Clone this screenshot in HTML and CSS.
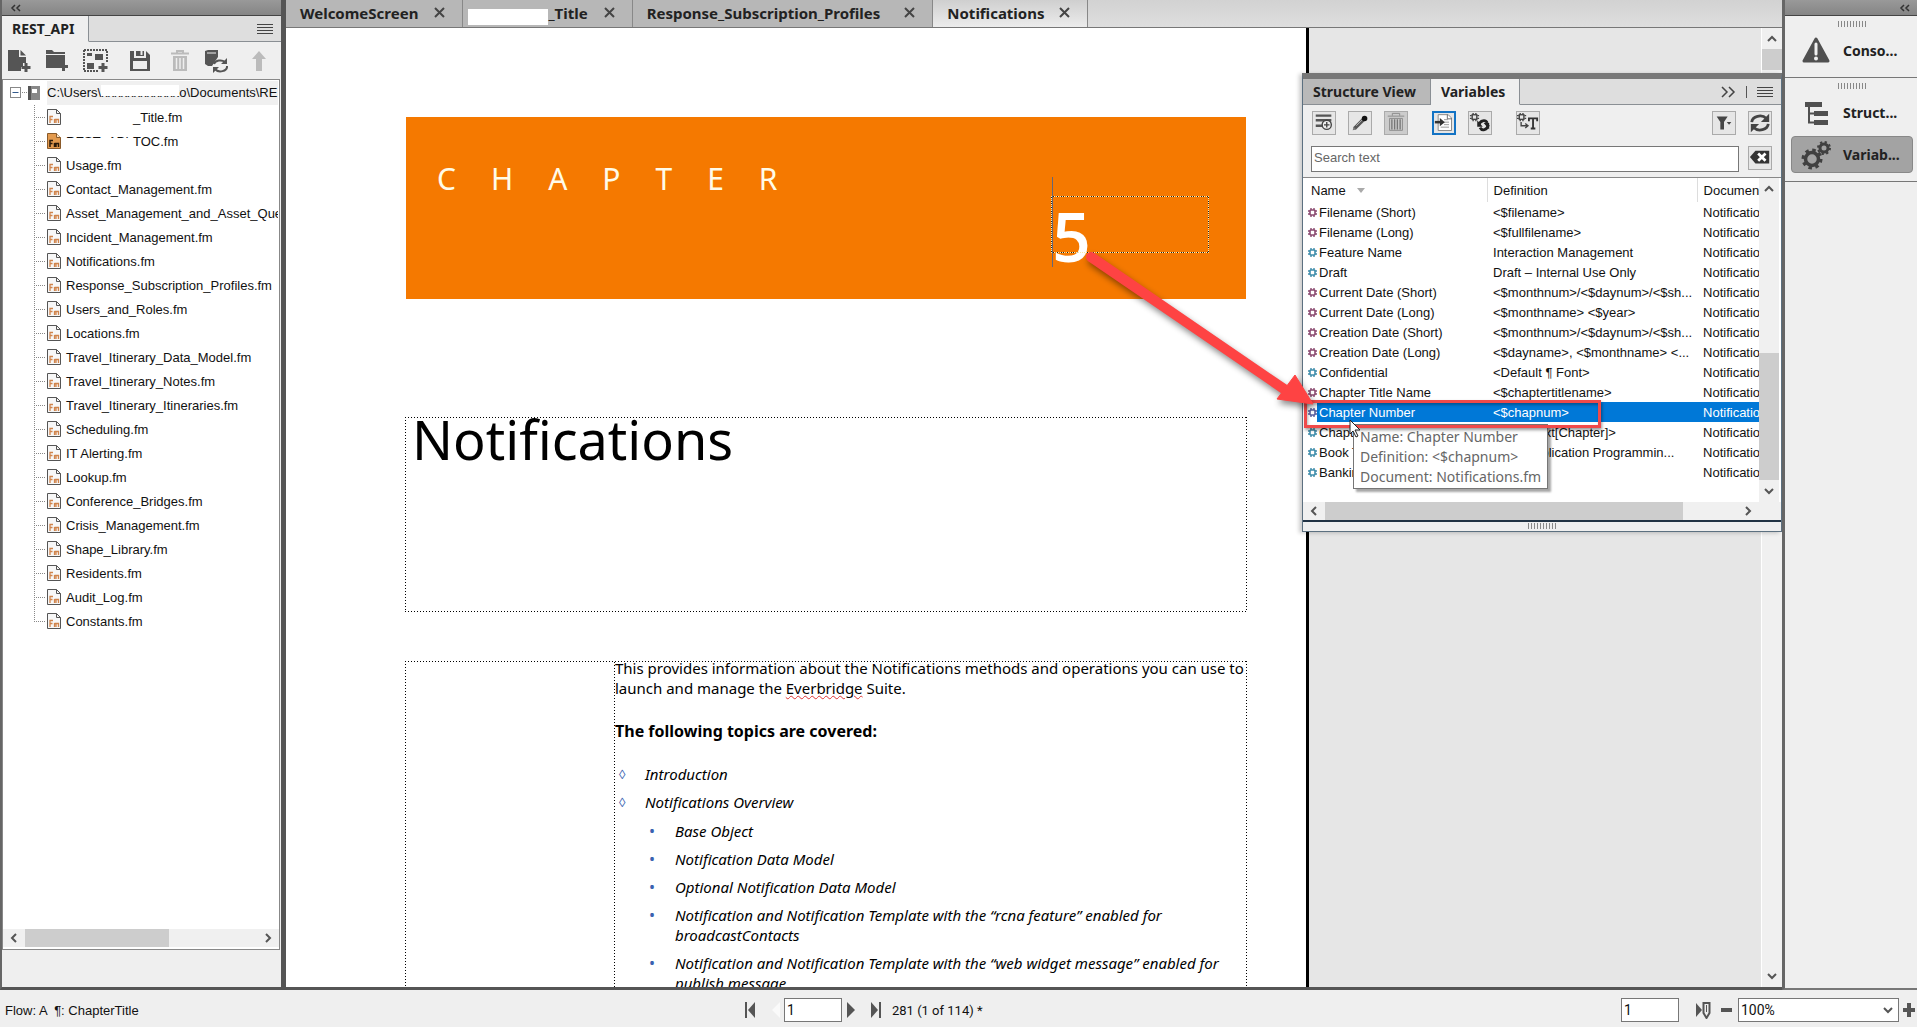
FILE: index.html
```
<!DOCTYPE html>
<html lang="en">

<head>
    <meta charset="UTF-8">
    <meta name="viewport" content="width=device-width, initial-scale=1.0">
    <title>Notifications</title>
    <link rel="stylesheet" href="styles.css">
</head>

<body>
    <svg class="sprite" aria-hidden="true">
        <symbol id="i-menu" viewBox="0 0 16 12">
            <path d="M0 1.5h16M0 4.5h16M0 7.5h16M0 10.5h16" stroke="#444" />
        </symbol>
        <symbol id="i-left2" viewBox="0 0 12 8">
            <path d="M5 1L2 4l3 3M10 1L7 4l3 3" fill="none" stroke="#333" stroke-width="1.5" />
        </symbol>
        <symbol id="i-close" viewBox="0 0 11 11">
            <path d="M1 1l9 9M10 1l-9 9" stroke="#444" stroke-width="2" />
        </symbol>
        <symbol id="i-chev" viewBox="0 0 12 12">
            <path d="M2 8l4-4 4 4" fill="none" stroke="#555" stroke-width="2" />
        </symbol>
        <symbol id="i-fm" viewBox="0 0 14 16">
            <path d="M.5.5h9l4 4v11H.5z" fill="#f7f7f7" stroke="#555" />
            <path d="M9.5.5v4h4" fill="none" stroke="#555" />
            <path d="M3 14V7.500h3M3 10.500h2.500M7.500 14v-4M7.500 10.500h1.500V14M9.500 10.500h2V14" fill="none" stroke="#d0844c" stroke-width="1.300" />
        </symbol>
        <symbol id="i-fm-on" viewBox="0 0 14 16">
            <path d="M.5.5h9l4 4v11H.5z" fill="#e39a4e" stroke="#8a5a2a" />
            <path d="M9.500.5v4h4" fill="#fbe3c6" stroke="#8a5a2a" />
            <path d="M3 14V7.500h3M3 10.500h2.500M7.500 14v-4M7.500 10.500h1.500V14M9.500 10.500h2V14" fill="none" stroke="#2b1a0a" stroke-width="1.500" />
        </symbol>
        <symbol id="i-gear" viewBox="0 0 9 9">
            <path d="M3 0v2M6 0v2M3 7v2M6 7v2M0 3h2M0 6h2M7 3h2M7 6h2" stroke="currentColor" stroke-width="1.400" />
            <rect x="2" y="2" width="5" height="5" rx="1" fill="#fff" stroke="currentColor" stroke-width="1.600" />
        </symbol>
        <symbol id="i-grip" viewBox="0 0 28 6">
            <path d="M.5 0v6M3.500 0v6M6.500 0v6M9.500 0v6M12.500 0v6M15.500 0v6M18.500 0v6M21.500 0v6M24.500 0v6M27.500 0v6" stroke="#888" />
        </symbol>
        <symbol id="i-sync" viewBox="0 0 24 24">
            <path d="M3 11a9 7 0 0 1 16-4M21 13a9 7 0 0 1-16 4" fill="none" stroke="#444" stroke-width="3" />
            <path d="M22 2v9h-9zM2 22v-9h9z" fill="#444" />
        </symbol>
    </svg>

    <div class="app">
        <aside class="book">
            <div class="bar"><svg width="12" height="8"><use href="#i-left2" /></svg></div>
            <div class="tabs book-tabs">
                <button class="tab active">REST_API</button>
                <button class="plain menu" aria-label="Panel menu"><svg width="16" height="12"><use href="#i-menu" /></svg></button>
            </div>
            <div class="book-tools">
                <button class="plain" aria-label="Add file"><svg width="24" height="24" viewBox="0 0 24 24">
                        <path d="M1 1h11v7h7v6h-3v4h-2v4H1z" fill="#555" />
                        <path d="M13.500 1l5.500 5.500h-5.500z" fill="#555" />
                        <path d="M19 14v9M14.500 18.500h9" stroke="#555" stroke-width="3" />
                    </svg></button>
                <button class="plain" aria-label="Add folder"><svg width="24" height="24" viewBox="0 0 24 24">
                        <path d="M1 1h6l2 2h11v2H1zM1 6h19v7h-3v3h-3v3H1z" fill="#555" />
                        <path d="M18.500 13v9M14 17.500h9" stroke="#555" stroke-width="3" />
                    </svg></button>
                <button class="plain" aria-label="Add group"><svg width="26" height="24" viewBox="0 0 26 24">
                        <path d="M1 1h23v13M1 1v21h15" fill="none" stroke="#555" stroke-width="2" stroke-dasharray="2 1" />
                        <path d="M4 4h5v3H4zM12 5h8v6h-8zM4 14h7v6H4z" fill="#555" />
                        <path d="M20 14v9M15.500 18.500h9" stroke="#555" stroke-width="3" />
                    </svg></button>
                <button class="plain spaced" aria-label="Save"><svg width="22" height="22" viewBox="0 0 22 22">
                        <path d="M1 1h4v7h12V1l4 4v16H1z" fill="#555" />
                        <path d="M7 1h8v5H7z" fill="#555" />
                        <path d="M11.500 1h2v4h-2zM4 11h14v8H4z" fill="#efefef" />
                    </svg></button>
                <button class="plain spaced" aria-label="Delete"><svg width="18" height="22" viewBox="0 0 18 22">
                        <path d="M0 3.500h18M6 3V1h6v2" fill="none" stroke="#bbb" stroke-width="2" />
                        <path d="M2 6h14v15H2z" fill="#bbb" />
                        <path d="M5.500 8v11M9 8v11M12.500 8v11" stroke="#efefef" stroke-width="1.500" />
                    </svg></button>
                <button class="plain" aria-label="Update book"><svg width="25" height="24" viewBox="0 0 25 24">
                        <path d="M2 2l3-1h10v7l-6 9H5l-3-2z" fill="#555" />
                        <path d="M4 4h9" stroke="#efefef" />
                        <path d="M11 15a6.500 5 0 0 1 11-2M24 17a6.500 5 0 0 1-12 3" fill="none" stroke="#555" stroke-width="2" />
                        <path d="M24 9v6h-6zM10 24v-6h6z" fill="#555" />
                    </svg></button>
                <button class="plain" aria-label="Move up"><svg width="14" height="20" viewBox="0 0 14 20">
                        <path d="M7 0l7 8h-4v12H4V8H0z" fill="#bbb" />
                    </svg></button>
            </div>
            <div class="tree-box">
                <div class="tree">
                    <div class="root">
                        <svg width="37" height="16" viewBox="0 0 37 16">
                            <rect x=".5" y="2.500" width="10" height="10" fill="#fff" stroke="#888" />
                            <path d="M2.500 7.500h6" stroke="#335a8c" />
                            <path d="M12 7.500h5" stroke="#888" stroke-dasharray="1 1" />
                            <path d="M18 1h12v14H18z" fill="#888" />
                            <path d="M18 1h3v14h-3z" fill="#555" />
                            <path d="M22 4h5v4h-5z" fill="#fff" />
                        </svg>
                        <span class="path">C:\Users\<span class="hide-top">xxxxxxxxxxxx</span>o\Documents\REST_API</span>
                    </div>
                    <ul class="files">
                        <li><svg><use href="#i-fm" /></svg><span class="blank"></span>_Title.fm</li>
                        <li><svg><use href="#i-fm-on" /></svg><span class="hide-low">REST_API</span>TOC.fm</li>
                        <li><svg><use href="#i-fm" /></svg>Usage.fm</li>
                        <li><svg><use href="#i-fm" /></svg>Contact_Management.fm</li>
                        <li><svg><use href="#i-fm" /></svg>Asset_Management_and_Asset_Queries.fm</li>
                        <li><svg><use href="#i-fm" /></svg>Incident_Management.fm</li>
                        <li><svg><use href="#i-fm" /></svg>Notifications.fm</li>
                        <li><svg><use href="#i-fm" /></svg>Response_Subscription_Profiles.fm</li>
                        <li><svg><use href="#i-fm" /></svg>Users_and_Roles.fm</li>
                        <li><svg><use href="#i-fm" /></svg>Locations.fm</li>
                        <li><svg><use href="#i-fm" /></svg>Travel_Itinerary_Data_Model.fm</li>
                        <li><svg><use href="#i-fm" /></svg>Travel_Itinerary_Notes.fm</li>
                        <li><svg><use href="#i-fm" /></svg>Travel_Itinerary_Itineraries.fm</li>
                        <li><svg><use href="#i-fm" /></svg>Scheduling.fm</li>
                        <li><svg><use href="#i-fm" /></svg>IT Alerting.fm</li>
                        <li><svg><use href="#i-fm" /></svg>Lookup.fm</li>
                        <li><svg><use href="#i-fm" /></svg>Conference_Bridges.fm</li>
                        <li><svg><use href="#i-fm" /></svg>Crisis_Management.fm</li>
                        <li><svg><use href="#i-fm" /></svg>Shape_Library.fm</li>
                        <li><svg><use href="#i-fm" /></svg>Residents.fm</li>
                        <li><svg><use href="#i-fm" /></svg>Audit_Log.fm</li>
                        <li><svg><use href="#i-fm" /></svg>Constants.fm</li>
                    </ul>
                </div>
                <div class="hscroll">
                    <svg class="chev left"><use href="#i-chev" /></svg>
                    <div class="track"><div class="thumb tree-thumb"></div></div>
                    <svg class="chev right"><use href="#i-chev" /></svg>
                </div>
            </div>
        </aside>

        <main class="work">
            <nav class="doc-tabs">
                <div class="doc-tab"><span>WelcomeScreen</span><button class="plain" aria-label="Close"><svg width="11" height="11"><use href="#i-close" /></svg></button></div>
                <div class="doc-tab second"><span class="cover"></span><span>_Title</span><button class="plain" aria-label="Close"><svg width="11" height="11"><use href="#i-close" /></svg></button></div>
                <div class="doc-tab third"><span>Response_Subscription_Profiles</span><button class="plain" aria-label="Close"><svg width="11" height="11"><use href="#i-close" /></svg></button></div>
                <div class="doc-tab active"><span>Notifications</span><button class="plain" aria-label="Close"><svg width="11" height="11"><use href="#i-close" /></svg></button></div>
            </nav>
            <div class="canvas">
                <article class="page">
                    <header class="banner">
                        <span class="chapter">CHAPTER</span>
                        <div class="number">5</div>
                    </header>
                    <div class="frame title-frame">
                        <h1>Notifications</h1>
                    </div>
                    <div class="frame body-frame">
                        <div class="column">
                            <p>This provides information about the Notifications methods and operations you can use to launch and manage the <span class="typo">Everbridge</span> Suite.</p>
                            <h2>The following topics are covered:</h2>
                            <ul class="topics">
                                <li>Introduction</li>
                                <li>Notifications Overview
                                    <ul>
                                        <li>Base Object</li>
                                        <li>Notification Data Model</li>
                                        <li>Optional Notification Data Model</li>
                                        <li>Notification and Notification Template with the “rcna feature” enabled for broadcastContacts</li>
                                        <li>Notification and Notification Template with the “web widget message” enabled for publish message</li>
                                    </ul>
                                </li>
                            </ul>
                        </div>
                    </div>
                </article>
                <div class="desk"></div>
                <div class="vscroll doc-scroll">
                    <svg class="chev"><use href="#i-chev" /></svg>
                    <div class="track"><div class="thumb"></div></div>
                    <svg class="chev down"><use href="#i-chev" /></svg>
                </div>
            </div>

            <section class="vars">
                <div class="tabs vars-tabs">
                    <button class="tab">Structure View</button>
                    <button class="tab active">Variables</button>
                    <button class="plain more" aria-label="More"><svg width="16" height="12" viewBox="0 0 16 12">
                            <path d="M2 1l5 5-5 5M9 1l5 5-5 5" fill="none" stroke="#444" stroke-width="1.500" />
                        </svg></button>
                    <button class="plain menu" aria-label="Panel menu"><svg width="16" height="12"><use href="#i-menu" /></svg></button>
                </div>
                <div class="vars-tools">
                    <button class="tool" aria-label="New variable"><svg viewBox="0 0 24 24">
                            <path d="M3 4h17M3 9h17M3 15h7" stroke="#555" stroke-width="2.500" />
                            <circle cx="15" cy="14" r="5" fill="#eee" stroke="#444" stroke-width="1.500" />
                            <path d="M15 11v6M12 14h6" stroke="#444" stroke-width="1.500" />
                        </svg></button>
                    <button class="tool" aria-label="Edit"><svg viewBox="0 0 24 24">
                            <path d="M6 18L17 7" stroke="#555" stroke-width="4" />
                            <path d="M8 15l8-8" stroke="#bbb" />
                            <path d="M4 20l1-4 3 3z" fill="#777" />
                            <circle cx="17" cy="7" r="3" fill="#111" />
                        </svg></button>
                    <button class="tool off" aria-label="Delete"><svg viewBox="0 0 24 24">
                            <path d="M3 4.500h18M8 4V1.500h8V4M5 7h14v13H5z" fill="none" stroke="#888" />
                            <path d="M7.500 8v11M10.500 8v11M13.500 8v11M16.500 8v11" stroke="#777" stroke-width="1.500" />
                        </svg></button>
                    <button class="tool insert on" aria-label="Insert"><svg viewBox="0 0 24 24">
                            <path d="M5 2h12l4 4v15H5z" fill="#fff" stroke="#777" />
                            <path d="M16 2v5h5" fill="none" stroke="#555" />
                            <path d="M12 8h5M12 11h6M12 14h6M8 17h10" stroke="#888" />
                            <path d="M1 11h7" stroke="#333" stroke-width="3" />
                            <path d="M7 6l6 5-6 5z" fill="#333" />
                        </svg></button>
                    <button class="tool" aria-label="Update variable"><svg viewBox="0 0 24 24">
                            <path d="M4.500 1v2M7.500 1v2M4.500 8v2M7.500 8v2M1 4h2M1 7h2M9 4h2M9 7h2" stroke="#444" stroke-width="1.500" />
                            <rect x="3.500" y="3" width="5" height="5" fill="none" stroke="#444" stroke-width="1.500" />
                            <path d="M11 14c1-5 7-6 9-2M21 14c-1 6-7 7-9 3" fill="none" stroke="#222" stroke-width="3" />
                            <path d="M9 9v7h6zM22 19v-7h-6z" fill="#222" />
                        </svg></button>
                    <button class="tool text" aria-label="Convert to text"><svg viewBox="0 0 24 24">
                            <path d="M3.500 1v2M6.500 1v2M3.500 8v2M6.500 8v2M0 4h2M0 7h2M8 4h2M8 7h2" stroke="#444" stroke-width="1.500" />
                            <rect x="2.500" y="3" width="5" height="5" fill="none" stroke="#444" stroke-width="1.500" />
                            <path d="M4.500 11v4H11M9 12.500l3 2.500-3 2.500" fill="none" stroke="#444" stroke-width="1.500" />
                            <path d="M13 10V7h9v3M17.500 7v11M15 18h5" fill="none" stroke="#333" stroke-width="2" />
                        </svg></button>
                    <button class="tool filter" aria-label="Filter"><svg viewBox="0 0 24 24">
                            <path d="M4 5h12l-4 6v8H8v-8z" fill="#444" />
                            <path d="M15 11h5l-2.500 3z" fill="#444" />
                        </svg></button>
                    <button class="tool" aria-label="Refresh"><svg viewBox="0 0 24 24"><use href="#i-sync" /></svg></button>
                </div>
                <div class="search">
                    <input type="text" placeholder="Search text" aria-label="Search text">
                    <button class="tool" aria-label="Clear"><svg viewBox="0 0 24 24">
                            <path d="M1 11l6-7h15v14H7z" fill="#333" />
                            <path d="M10 7l8 8M18 7l-8 8" stroke="#fff" stroke-width="3" />
                        </svg></button>
                </div>
                <div class="list">
                    <div class="list-main">
                        <table>
                            <colgroup>
                                <col class="c-icon">
                                <col class="c-name">
                                <col class="c-def">
                                <col>
                            </colgroup>
                            <thead>
                                <tr>
                                    <th colspan="2">Name <svg class="sort" viewBox="0 0 8 5"><path d="M0 0h8L4 5z" fill="#aaa" /></svg></th>
                                    <th>Definition</th>
                                    <th>Document</th>
                                </tr>
                            </thead>
                            <tbody>
                                <tr><td><svg><use href="#i-gear" /></svg></td><td>Filename (Short)</td><td>&lt;$filename&gt;</td><td>Notifications</td></tr>
                                <tr><td><svg><use href="#i-gear" /></svg></td><td>Filename (Long)</td><td>&lt;$fullfilename&gt;</td><td>Notifications</td></tr>
                                <tr class="user"><td><svg><use href="#i-gear" /></svg></td><td>Feature Name</td><td>Interaction Management</td><td>Notifications</td></tr>
                                <tr class="user"><td><svg><use href="#i-gear" /></svg></td><td>Draft</td><td>Draft – Internal Use Only</td><td>Notifications</td></tr>
                                <tr><td><svg><use href="#i-gear" /></svg></td><td>Current Date (Short)</td><td>&lt;$monthnum&gt;/&lt;$daynum&gt;/&lt;$sh...</td><td>Notifications</td></tr>
                                <tr><td><svg><use href="#i-gear" /></svg></td><td>Current Date (Long)</td><td>&lt;$monthname&gt; &lt;$year&gt;</td><td>Notifications</td></tr>
                                <tr><td><svg><use href="#i-gear" /></svg></td><td>Creation Date (Short)</td><td>&lt;$monthnum&gt;/&lt;$daynum&gt;/&lt;$sh...</td><td>Notifications</td></tr>
                                <tr><td><svg><use href="#i-gear" /></svg></td><td>Creation Date (Long)</td><td>&lt;$dayname&gt;, &lt;$monthname&gt; &lt;...</td><td>Notifications</td></tr>
                                <tr class="user"><td><svg><use href="#i-gear" /></svg></td><td>Confidential</td><td>&lt;Default ¶ Font&gt;</td><td>Notifications</td></tr>
                                <tr><td><svg><use href="#i-gear" /></svg></td><td>Chapter Title Name</td><td>&lt;$chaptertitlename&gt;</td><td>Notifications</td></tr>
                                <tr class="selected"><td><svg><use href="#i-gear" /></svg></td><td>Chapter Number</td><td>&lt;$chapnum&gt;</td><td>Notifications</td></tr>
                                <tr class="user"><td><svg><use href="#i-gear" /></svg></td><td>Chapter</td><td>&lt;$paratext[Chapter]&gt;</td><td>Notifications</td></tr>
                                <tr class="user"><td><svg><use href="#i-gear" /></svg></td><td>Book Title</td><td>Suite Application Programmin...</td><td>Notifications</td></tr>
                                <tr class="user"><td><svg><use href="#i-gear" /></svg></td><td>Banking</td><td></td><td>Notifications</td></tr>
                            </tbody>
                        </table>
                        <div class="vscroll list-scroll">
                            <svg class="chev"><use href="#i-chev" /></svg>
                            <div class="track"><div class="thumb"></div></div>
                            <svg class="chev down"><use href="#i-chev" /></svg>
                        </div>
                    </div>
                    <div class="hscroll vars-hscroll">
                        <svg class="chev left"><use href="#i-chev" /></svg>
                        <div class="track"><div class="thumb vars-thumb"></div></div>
                        <svg class="chev right"><use href="#i-chev" /></svg>
                    </div>
                </div>
                <div class="grip"><svg width="28" height="6"><use href="#i-grip" /></svg></div>
                <div class="tooltip" role="tooltip">Name: Chapter Number<br>Definition: &lt;$chapnum&gt;<br>Document: Notifications.fm</div>
                <div class="callout"></div>
                <svg class="cursor" width="14" height="20" viewBox="0 0 14 20">
                    <path d="M1 1v14l3-3 3 6 2-1-3-6h5z" fill="#fff" stroke="#222" />
                </svg>
                <svg class="arrow" width="240" height="170" viewBox="0 0 240 170">
                    <path d="M9 10L202 142" stroke="#fe4343" stroke-width="10" stroke-linecap="round" />
                    <path d="M213 128l18 29-36-5z" fill="#fe4343" stroke="#fe4343" />
                </svg>
            </section>
        </main>

        <aside class="dock">
            <div class="bar"><svg width="12" height="8"><use href="#i-left2" /></svg></div>
            <div class="dock-group">
                <svg class="dock-grip" width="28" height="6"><use href="#i-grip" /></svg>
                <button class="dock-item"><svg width="30" height="30" viewBox="0 0 30 30">
                        <path d="M15 3l12 22H3z" fill="#505050" stroke="#505050" stroke-width="3" stroke-linejoin="round" />
                        <path d="M15 8v10" stroke="#f0f0f0" stroke-width="3" stroke-linecap="round" />
                        <circle cx="15" cy="22.500" r="2" fill="#f0f0f0" />
                    </svg>Conso...</button>
            </div>
            <div class="dock-group">
                <svg class="dock-grip" width="28" height="6"><use href="#i-grip" /></svg>
                <button class="dock-item"><svg width="30" height="30" viewBox="0 0 30 30">
                        <path d="M4 4h17v5H4zM13 13h14v5H13zM13 22h14v5H13z" fill="#505050" />
                        <path d="M8 8v16.500h6M8 15.500h6" fill="none" stroke="#505050" stroke-width="2" />
                    </svg>Struct...</button>
                <button class="dock-item pressed"><svg width="30" height="30" viewBox="0 0 30 30">
                        <circle cx="11" cy="19" r="6.500" fill="none" stroke="#404040" stroke-width="3.500" />
                        <circle cx="11" cy="19" r="9" fill="none" stroke="#404040" stroke-width="3" stroke-dasharray="3.500 3.560" />
                        <circle cx="23" cy="8" r="4" fill="none" stroke="#404040" stroke-width="3" />
                        <circle cx="23" cy="8" r="6" fill="none" stroke="#404040" stroke-width="2" stroke-dasharray="2.300 2.400" />
                    </svg>Variab...</button>
            </div>
        </aside>
    </div>

    <footer class="status">
        <span class="flow">Flow: A &nbsp;¶: ChapterTitle</span>
        <div class="pager">
            <button class="plain" aria-label="First page"><svg width="10" height="16" viewBox="0 0 10 16">
                    <path d="M1 0v16" stroke="#555" stroke-width="2" />
                    <path d="M10 0v16L3 8z" fill="#555" />
                </svg></button>
            <button class="plain prev" aria-label="Previous page"><svg width="8" height="16" viewBox="0 0 8 16">
                    <path d="M8 0v16L0 8z" fill="#fafafa" />
                </svg></button>
            <input class="box" type="text" value="1" aria-label="Page">
            <button class="plain next" aria-label="Next page"><svg width="8" height="16" viewBox="0 0 8 16">
                    <path d="M0 0v16l8-8z" fill="#555" />
                </svg></button>
            <button class="plain last" aria-label="Last page"><svg width="10" height="16" viewBox="0 0 10 16">
                    <path d="M9 0v16" stroke="#555" stroke-width="2" />
                    <path d="M0 0v16l7-8z" fill="#555" />
                </svg></button>
            <span class="count">281 (1 of 114) *</span>
        </div>
        <div class="zoom">
            <input class="box" type="text" value="1" aria-label="Line">
            <svg class="pen" width="15" height="17" viewBox="0 0 15 17">
                <path d="M0 1v14l6-7z" fill="#555" />
                <path d="M7.500 1h6v10l-3 5-3-5z" fill="#eee" stroke="#555" stroke-width="2" />
                <path d="M10.500 3v7" stroke="#555" />
            </svg>
            <button class="plain minus" aria-label="Zoom out"><svg width="11" height="12" viewBox="0 0 11 12">
                    <path d="M0 6h11" stroke="#555" stroke-width="4" />
                </svg></button>
            <div class="zoom-select">
                <select aria-label="Zoom">
                    <option>100%</option>
                </select>
                <svg class="chev down"><use href="#i-chev" /></svg>
            </div>
            <button class="plain" aria-label="Zoom in"><svg width="12" height="14" viewBox="0 0 12 14">
                    <path d="M0 7h12M6 0v14" stroke="#555" stroke-width="4" />
                </svg></button>
        </div>
    </footer>
</body>

</html>
```
FILE: styles.css
```
* {
    box-sizing: border-box;
}

body {
    margin: 0;
    height: 100vh;
    display: flex;
    flex-direction: column;
    overflow: hidden;
    background: #efefef;
    color: #111;
    font-family: "Liberation Sans", Arial, sans-serif;
    font-size: 13px;
}

svg {
    display: block;
    flex: none;
}

button,
input,
select {
    font: inherit;
    color: inherit;
}

ul {
    list-style: none;
    margin: 0;
    padding: 0;
}

.sprite {
    position: absolute;
    width: 0;
    height: 0;
}

.app {
    flex: 1;
    display: flex;
    min-height: 0;
}

.plain {
    border: 0;
    padding: 0;
    background: none;
}

.bar {
    height: 16px;
    display: flex;
    align-items: center;
    padding: 0 8px;
    background: linear-gradient(#999, #858585);
    border-bottom: 1px solid #444;
}

/* panel tabs */
.tabs {
    display: flex;
    align-items: center;
    height: 26px;
    background: #dedede;
    box-shadow: inset 0 -1px #8a8f94;
}

.tab {
    height: 26px;
    padding: 0 14px 0 10px;
    border: 0;
    border-right: 1px solid #8a8f94;
    border-bottom: 1px solid #8a8f94;
    background: #b9b9b9;
    font: bold 14px "Noto Sans", sans-serif;
    color: #222;
}

.tab.active {
    background: #efefef;
    border-bottom-color: #efefef;
}

.menu {
    margin: 0 8px 0 auto;
}

/* book panel */
.book {
    width: 286px;
    display: flex;
    flex-direction: column;
    border-left: 2px solid #666;
    border-right: 5px solid #555;
    border-bottom: 3px solid #555;
}

.book-tools {
    display: flex;
    align-items: center;
    gap: 14px;
    height: 37px;
    padding: 0 15px 0 5px;
}

.book-tools .spaced {
    margin-left: 6px;
}

.book-tools .plain:last-child {
    margin-left: auto;
}

.tree-box {
    flex: 1;
    min-height: 0;
    display: flex;
    flex-direction: column;
    margin: 0 1px 37px 0;
    padding-bottom: 2px;
    border: 1px solid #888;
    background: #fff;
}

.tree {
    flex: 1;
    overflow: hidden;
    margin-right: 1px;
    padding-top: 1px;
    white-space: nowrap;
}

.root {
    display: flex;
    align-items: center;
    height: 24px;
    padding-left: 7px;
}

.path {
    flex: 1;
    height: 24px;
    line-height: 24px;
    background: #f0f0f0;
}

.hide-top,
.hide-low {
    position: relative;
}

.hide-top::after,
.hide-low::after {
    content: "";
    position: absolute;
    left: 0;
    right: 0;
    top: 0;
    height: 11px;
    background: #fff;
}

.hide-low::after {
    top: 4px;
    height: 12px;
}

.files {
    margin-left: 31px;
    background: repeating-linear-gradient(#888 0 1px, #fff 1px 2px) no-repeat 0 0 / 1px calc(100% - 12px);
}

.files li {
    display: flex;
    align-items: center;
    height: 24px;
}

.files li::before {
    content: "";
    flex: none;
    width: 11px;
    margin-right: 2px;
    height: 1px;
    background: repeating-linear-gradient(90deg, #888 0 1px, #fff 1px 2px);
}

.files svg {
    width: 14px;
    height: 16px;
    margin-right: 5px;
}

.files .blank,
.files .hide-low {
    width: 67px;
}

/* scroll bars */
.chev {
    width: 12px;
    height: 12px;
}

.chev.left {
    transform: rotate(-90deg);
}

.chev.right {
    transform: rotate(90deg);
}

.chev.down {
    transform: rotate(180deg);
}

.hscroll {
    display: flex;
    align-items: center;
    gap: 5px;
    height: 18px;
    padding: 0 5px;
    background: #f0f0f0;
}

.vscroll {
    display: flex;
    flex-direction: column;
    align-items: center;
    gap: 4px;
    width: 20px;
    padding: 5px 0;
    background: #f0f0f0;
}

.track {
    flex: 1;
    align-self: stretch;
}

.thumb {
    background: #cdcdcd;
}

.hscroll .thumb {
    height: 18px;
}

.tree-thumb {
    width: 62%;
}

/* document area */
.work {
    flex: 1;
    min-width: 0;
    position: relative;
    display: flex;
    flex-direction: column;
    border-bottom: 3px solid #555;
}

.doc-tabs {
    display: flex;
    height: 28px;
    background: linear-gradient(#d2d2d2, #dedede);
    border-bottom: 1px solid #777;
}

.doc-tab {
    display: flex;
    align-items: center;
    gap: 16px;
    padding: 0 17px 2px 14px;
    background: #b7b7b7;
    border-right: 1px solid #888;
    font: bold 15px "Noto Sans", sans-serif;
    color: #222;
}

.doc-tab.active {
    gap: 14px;
    background: linear-gradient(#cfcfcf, #ececec);
}

.doc-tab.second {
    padding-left: 5px;
}

.doc-tab.third {
    gap: 24px;
}

.cover {
    align-self: flex-end;
    width: 80px;
    height: 16px;
    margin-right: -16px;
    background: #fff;
}

.canvas {
    flex: 1;
    min-height: 0;
    display: flex;
}

.page {
    width: 1023px;
    padding: 89px 59px 0 119px;
    overflow: hidden;
    background: #fff;
    border-right: 3px solid #000;
    font-family: "Noto Sans", sans-serif;
    color: #000;
}

.desk {
    flex: 1;
    background: #e6e6e6;
    border-right: 1px solid #fff;
}

.doc-scroll .thumb {
    height: 21px;
}

.banner {
    display: flex;
    justify-content: space-between;
    height: 182px;
    margin: 0 1px;
    padding: 41px 37px 0 31px;
    background: #f57900;
    color: #fffbe8;
}

.chapter {
    font-size: 30px;
    line-height: 42px;
    letter-spacing: 35px;
}

.number {
    width: 158px;
    height: 57px;
    margin-top: 38px;
    border: 1px dashed #222;
    outline: 1px dotted #ffe9a8;
    outline-offset: -1px;
    font: 600 68px/78px "Open Sans", sans-serif;
    color: #fff;
}

/* text caret */
.number::before {
    content: "";
    position: absolute;
    width: 1px;
    height: 90px;
    margin-top: -20px;
    background: #667;
}

/* text frames, one dot every three pixels */
.frame {
    background:
        repeating-linear-gradient(90deg, #000 0 1px, transparent 1px 3px) top / 100% 1px no-repeat,
        repeating-linear-gradient(90deg, #000 0 1px, transparent 1px 3px) bottom / 100% 1px no-repeat,
        repeating-linear-gradient(#000 0 1px, transparent 1px 3px) left / 1px 100% no-repeat,
        repeating-linear-gradient(#000 0 1px, transparent 1px 3px) right / 1px 100% no-repeat;
}

.title-frame {
    height: 195px;
    margin-top: 118px;
    padding: 1px 7px 0;
}

h1 {
    margin: 0;
    font-size: 54px;
    font-weight: normal;
    line-height: 42px;
}

.body-frame {
    height: 600px;
    margin-top: 49px;
    padding: 1px 1px 0 209px;
}

.column {
    display: flow-root;
    height: 100%;
    padding-left: 1px;
    background: repeating-linear-gradient(#000 0 1px, transparent 1px 3px) left / 1px 100% no-repeat;
    font-size: 15px;
    line-height: 20px;
}

.column p {
    margin: -4px 0 0;
}

.column h2 {
    margin: 23px 0;
    font-size: 16px;
    line-height: 20px;
}

.typo {
    text-decoration: underline wavy #d33 1px;
}

.topics {
    font-style: italic;
}

.topics li {
    position: relative;
    margin-top: 8px;
    padding-left: 30px;
}

.topics li::before {
    content: "◊";
    position: absolute;
    left: 4px;
    font-style: normal;
    font-size: 13px;
    color: #3a62b0;
}

.topics ul {
    padding-top: 1px;
}

.topics ul li::before {
    content: "•";
    font-size: 16px;
}

/* variables panel */
.vars {
    position: absolute;
    top: 73px;
    right: 0;
    width: 480px;
    background: #efefef;
    border: 1px solid #5c7080;
    border-top: 6px solid #777;
    box-shadow: -3px 1px 4px rgba(0, 0, 0, .2);
}

.vars-tabs .menu {
    margin: 0 8px 0 10px;
    padding-left: 10px;
    border-left: 1px solid #555;
}

.vars-tabs .more {
    margin-left: auto;
}

.vars-tools,
.search {
    display: flex;
    gap: 12px;
    padding: 6px 9px 0;
}

.search {
    gap: 9px;
    padding: 11px 9px 5px 8px;
}

.tool {
    width: 24px;
    height: 24px;
    padding: 0;
    border: 1px solid #aaa;
    background: #e6e6e6;
}

.tool svg {
    width: 22px;
    height: 22px;
}

.tool.off {
    background: #ccc;
}

.tool.on {
    border: 2px solid #1373c4;
}

.tool.on svg {
    width: 20px;
    height: 20px;
}

.tool.insert,
.tool.text {
    margin-left: 12px;
}

.tool.filter {
    margin-left: auto;
}

.search input {
    flex: 1;
    height: 26px;
    padding: 0 2px 3px;
    border: 1px solid #777;
    background: #fff;
}

.search input::placeholder {
    color: #666;
}

.list {
    border-top: 1px solid #888;
    border-bottom: 2px solid #234;
    background: #fff;
}

.list-main {
    display: flex;
    height: 324px;
    padding-right: 2px;
}

table {
    flex: 1;
    width: 0;
    height: 304px;
    table-layout: fixed;
    border-collapse: collapse;
}

.c-icon {
    width: 14px;
}

.c-name {
    width: 170px;
}

.c-def {
    width: 210px;
}

th,
td {
    height: 20px;
    padding: 0 0 0 6px;
    overflow: hidden;
    text-align: left;
    white-space: nowrap;
    font-weight: normal;
}

th {
    height: 24px;
    border-right: 1px solid #ddd;
}

th:first-child {
    padding-left: 8px;
}

th:last-child {
    border: 0;
}

td:first-child {
    padding-left: 5px;
    color: #8b4a70;
}

td:nth-child(2) {
    padding-left: 2px;
}

td svg {
    width: 9px;
    height: 9px;
}

.sort {
    display: inline-block;
    width: 8px;
    height: 5px;
    margin: 0 0 2px 8px;
}

.user td:first-child {
    color: #3f8dab;
}

.selected td {
    background: #0078d7;
    color: #fff;
}

.selected td:first-child {
    background: #fff;
    color: #5a5f9e;
}

.list-scroll .thumb {
    height: 127px;
    margin-top: 154px;
}

.vars-hscroll {
    padding-right: 27px;
}

.vars-thumb {
    width: 87%;
}

.grip {
    display: flex;
    justify-content: center;
    height: 9px;
    padding-top: 1px;
}

.tooltip {
    position: absolute;
    left: 50px;
    top: 345px;
    padding: 2px 6px 1px;
    background: #fff;
    border: 1px solid #767676;
    box-shadow: 3px 3px 2px rgba(0, 0, 0, .35);
    font: 14px/20px "Noto Sans", sans-serif;
    color: #666;
    white-space: nowrap;
}

.callout {
    position: absolute;
    left: 1px;
    top: 321px;
    width: 297px;
    height: 28px;
    border: 3px solid #f04a4a;
    box-shadow: 1px 2px 3px rgba(0, 0, 0, .4), inset 1px 2px 3px rgba(0, 0, 0, .3);
}

.cursor {
    position: absolute;
    left: 46px;
    top: 340px;
}

.arrow {
    position: absolute;
    left: -221px;
    top: 168px;
    filter: drop-shadow(2px 4px 3px rgba(0, 0, 0, .45));
}

/* right dock */
.dock {
    width: 135px;
    border-left: 3px solid #666;
    border-bottom: 2px solid #777;
}

.dock .bar {
    justify-content: flex-end;
    padding: 0 6px;
}

.dock-group {
    display: flex;
    flex-direction: column;
    padding: 5px 4px 8px 6px;
    border-bottom: 1px solid #777;
}

.dock-grip {
    align-self: center;
    margin-bottom: 5px;
}

.dock-item {
    display: flex;
    align-items: center;
    gap: 12px;
    height: 37px;
    padding: 0 9px;
    border: 1px solid transparent;
    border-radius: 4px;
    background: none;
    font: bold 14px "Noto Sans", sans-serif;
    color: #222;
}

.dock-item.pressed {
    margin-top: 5px;
    background: #a3a3a3;
    border-color: #888;
}

/* status bar */
.status {
    display: flex;
    align-items: center;
    height: 37px;
    padding: 3px 2px 0 5px;
}

.flow {
    flex: 0 0 740px;
}

.pager,
.zoom {
    display: flex;
    align-items: center;
    font: 14px "Roboto", sans-serif;
}

.zoom {
    margin-left: auto;
}

.box {
    width: 58px;
    height: 24px;
    padding: 0 2px;
    border: 1px solid #777;
    background: #fff;
}

.prev {
    margin: 0 4px 0 17px;
}

.next {
    margin: 0 16px 0 5px;
}

.count {
    margin-left: 11px;
    font-size: 13px;
}

.pen {
    margin: 0 10px 0 17px;
}

.minus {
    margin-right: 6px;
}

.zoom-select {
    position: relative;
    margin-right: 4px;
}

.zoom-select select {
    width: 161px;
    height: 24px;
    padding: 0 2px;
    appearance: none;
    border: 1px solid #777;
    border-radius: 0;
    background: #fff;
}

.zoom-select .chev {
    position: absolute;
    right: 5px;
    top: 6px;
}
```
